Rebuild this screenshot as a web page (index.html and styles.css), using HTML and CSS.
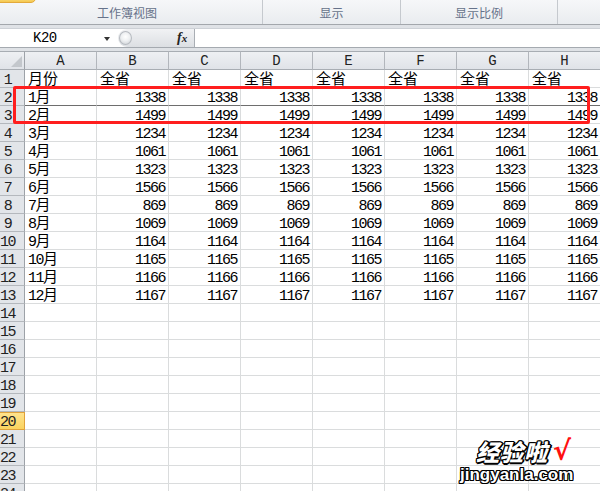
FILE: index.html
```html
<!DOCTYPE html>
<html lang="zh-CN">
<head>
<meta charset="utf-8">
<title>Excel</title>
<link rel="stylesheet" href="styles.css">
</head>
<body>
<div class="app">
  <div class="ribbon">
    <div class="filetab"></div>
    <div class="grp g1">工作簿视图</div>
    <div class="grp g2">显示</div>
    <div class="grp g3">显示比例</div>
    <div class="grp g4"></div>
  </div>
  <div class="fband">
    <div class="fbar">
      <div class="namebox"><span class="nb-text">K20</span><span class="nb-arrow"></span></div>
      <div class="fxarea"><span class="knob"></span><span class="fx"><i>f</i><i class="x">x</i></span></div>
      <div class="finput"></div>
    </div>
  </div>
  <div class="sheet">
    <div class="row hdr">
      <div class="corner"><svg width="11" height="11" viewBox="0 0 11 11"><polygon points="11,0 11,11 0,11" fill="#c3c7cc"/></svg></div>
      <div>A</div><div>B</div><div>C</div><div>D</div><div>E</div><div>F</div><div>G</div><div>H</div>
    </div>
    <div class="row"><div class="rh">1</div><div class="c t cjk">月份</div><div class="c t cjk">全省</div><div class="c t cjk">全省</div><div class="c t cjk">全省</div><div class="c t cjk">全省</div><div class="c t cjk">全省</div><div class="c t cjk">全省</div><div class="c t cjk">全省</div></div>
    <div class="row r2"><div class="rh">2</div><div class="c t">1月</div><div class="c n">1338</div><div class="c n">1338</div><div class="c n">1338</div><div class="c n">1338</div><div class="c n">1338</div><div class="c n">1338</div><div class="c n">1338</div></div>
    <div class="row"><div class="rh">3</div><div class="c t">2月</div><div class="c n">1499</div><div class="c n">1499</div><div class="c n">1499</div><div class="c n">1499</div><div class="c n">1499</div><div class="c n">1499</div><div class="c n">1499</div></div>
    <div class="row"><div class="rh">4</div><div class="c t">3月</div><div class="c n">1234</div><div class="c n">1234</div><div class="c n">1234</div><div class="c n">1234</div><div class="c n">1234</div><div class="c n">1234</div><div class="c n">1234</div></div>
    <div class="row"><div class="rh">5</div><div class="c t">4月</div><div class="c n">1061</div><div class="c n">1061</div><div class="c n">1061</div><div class="c n">1061</div><div class="c n">1061</div><div class="c n">1061</div><div class="c n">1061</div></div>
    <div class="row"><div class="rh">6</div><div class="c t">5月</div><div class="c n">1323</div><div class="c n">1323</div><div class="c n">1323</div><div class="c n">1323</div><div class="c n">1323</div><div class="c n">1323</div><div class="c n">1323</div></div>
    <div class="row"><div class="rh">7</div><div class="c t">6月</div><div class="c n">1566</div><div class="c n">1566</div><div class="c n">1566</div><div class="c n">1566</div><div class="c n">1566</div><div class="c n">1566</div><div class="c n">1566</div></div>
    <div class="row"><div class="rh">8</div><div class="c t">7月</div><div class="c n">869</div><div class="c n">869</div><div class="c n">869</div><div class="c n">869</div><div class="c n">869</div><div class="c n">869</div><div class="c n">869</div></div>
    <div class="row"><div class="rh">9</div><div class="c t">8月</div><div class="c n">1069</div><div class="c n">1069</div><div class="c n">1069</div><div class="c n">1069</div><div class="c n">1069</div><div class="c n">1069</div><div class="c n">1069</div></div>
    <div class="row"><div class="rh">10</div><div class="c t">9月</div><div class="c n">1164</div><div class="c n">1164</div><div class="c n">1164</div><div class="c n">1164</div><div class="c n">1164</div><div class="c n">1164</div><div class="c n">1164</div></div>
    <div class="row"><div class="rh">11</div><div class="c t">10月</div><div class="c n">1165</div><div class="c n">1165</div><div class="c n">1165</div><div class="c n">1165</div><div class="c n">1165</div><div class="c n">1165</div><div class="c n">1165</div></div>
    <div class="row"><div class="rh">12</div><div class="c t">11月</div><div class="c n">1166</div><div class="c n">1166</div><div class="c n">1166</div><div class="c n">1166</div><div class="c n">1166</div><div class="c n">1166</div><div class="c n">1166</div></div>
    <div class="row"><div class="rh">13</div><div class="c t">12月</div><div class="c n">1167</div><div class="c n">1167</div><div class="c n">1167</div><div class="c n">1167</div><div class="c n">1167</div><div class="c n">1167</div><div class="c n">1167</div></div>
    <div class="row"><div class="rh">14</div><div class="c"></div><div class="c"></div><div class="c"></div><div class="c"></div><div class="c"></div><div class="c"></div><div class="c"></div><div class="c"></div></div>
    <div class="row"><div class="rh">15</div><div class="c"></div><div class="c"></div><div class="c"></div><div class="c"></div><div class="c"></div><div class="c"></div><div class="c"></div><div class="c"></div></div>
    <div class="row"><div class="rh">16</div><div class="c"></div><div class="c"></div><div class="c"></div><div class="c"></div><div class="c"></div><div class="c"></div><div class="c"></div><div class="c"></div></div>
    <div class="row"><div class="rh">17</div><div class="c"></div><div class="c"></div><div class="c"></div><div class="c"></div><div class="c"></div><div class="c"></div><div class="c"></div><div class="c"></div></div>
    <div class="row"><div class="rh">18</div><div class="c"></div><div class="c"></div><div class="c"></div><div class="c"></div><div class="c"></div><div class="c"></div><div class="c"></div><div class="c"></div></div>
    <div class="row"><div class="rh">19</div><div class="c"></div><div class="c"></div><div class="c"></div><div class="c"></div><div class="c"></div><div class="c"></div><div class="c"></div><div class="c"></div></div>
    <div class="row"><div class="rh sel">20</div><div class="c"></div><div class="c"></div><div class="c"></div><div class="c"></div><div class="c"></div><div class="c"></div><div class="c"></div><div class="c"></div></div>
    <div class="row"><div class="rh">21</div><div class="c"></div><div class="c"></div><div class="c"></div><div class="c"></div><div class="c"></div><div class="c"></div><div class="c"></div><div class="c"></div></div>
    <div class="row"><div class="rh">22</div><div class="c"></div><div class="c"></div><div class="c"></div><div class="c"></div><div class="c"></div><div class="c"></div><div class="c"></div><div class="c"></div></div>
    <div class="row"><div class="rh">23</div><div class="c"></div><div class="c"></div><div class="c"></div><div class="c"></div><div class="c"></div><div class="c"></div><div class="c"></div><div class="c"></div></div>
    <div class="row"><div class="rh">24</div><div class="c"></div><div class="c"></div><div class="c"></div><div class="c"></div><div class="c"></div><div class="c"></div><div class="c"></div><div class="c"></div></div>
  </div>
  <div class="redbox"></div>
  <div class="wm">
    <div class="wm-top"><span class="wm-cn">经验啦</span><span class="wm-ck">√</span></div>
    <div class="wm-url">jingyanla.com</div>
  </div>
</div>
</body>
</html>
```
FILE: styles.css
```css
* { box-sizing: border-box; margin: 0; padding: 0; }
html, body { width: 600px; height: 491px; overflow: hidden; background: #fff; }
body { font-family: "Liberation Mono", "Noto Sans CJK SC", monospace; color: #000; }
.app { position: relative; width: 600px; height: 491px; overflow: hidden; }

/* ribbon */
.ribbon {
  position: relative; display: flex; height: 25px;
  border-bottom: 1px solid #a3a7ac;
  background: linear-gradient(#f6f7f9, #e9ecef);
}
.grp {
  height: 24px; line-height: 26px; text-align: center;
  font-family: "Noto Sans CJK SC", sans-serif; font-size: 12px; color: #66728a;
  border-right: 1px solid #c5c9ce;
}
.g1 { width: 263px; padding-right: 8px; }
.g2 { width: 138px; }
.g3 { width: 157px; }
.g4 { flex: 1; border-right: none; }
.filetab {
  position: absolute; left: -2px; top: -4px; width: 38px; height: 7px;
  background: linear-gradient(#fbe28f, #f5c84e);
  border: 1px solid #e3a93b; border-radius: 0 0 5px 0;
}

/* formula bar */
.fband { background: #dfe2e6; padding: 3px 0; }
.fbar {
  display: flex; height: 20px; background: #fff;
  border-top: 1px solid #cdd1d6; border-bottom: 1px solid #a5aab0;
}
.namebox { position: relative; width: 118px; height: 18px; }
.nb-text { position: absolute; left: 33px; top: 0; font-size: 14px; line-height: 19px; letter-spacing: -0.5px; }
.nb-arrow {
  position: absolute; left: 104px; top: 8px; width: 0; height: 0;
  border-left: 3px solid transparent; border-right: 3px solid transparent; border-top: 4px solid #333;
}
.fxarea {
  position: relative; width: 77px; height: 18px;
  background: linear-gradient(#f1f2f4, #dcdfe3);
  border-right: 1px solid #a9aeb4; border-radius: 9px 0 0 9px;
}
.knob {
  position: absolute; left: 1px; top: 2px; width: 13px; height: 14px; border-radius: 50%;
  background: radial-gradient(circle at 50% 40%, #ffffff 0%, #eef0f2 45%, #c9cdd2 100%);
  border: 1px solid #b7bbc1;
}
.fx {
  position: absolute; left: 59px; top: 0; font-family: "Liberation Serif", serif;
  font-weight: bold; font-size: 14px; line-height: 17px; color: #222;
}
.fx .x { font-size: 11px; }
.finput { flex: 1; }

/* sheet */
.row { display: grid; grid-template-columns: 25px repeat(8, 72px); height: 18px; }
.row > div {
  height: 18px; overflow: hidden; white-space: nowrap;
  border-right: 1px solid #dadcdd; border-bottom: 1px solid #dadcdd;
  font-size: 15px; line-height: 21px; letter-spacing: -1.5px;
}
.hdr { height: 19px; }
.hdr > div {
  height: 19px; background: linear-gradient(#eef0f3, #e0e3e8);
  border-top: 1px solid #a8adb3; border-right: 1px solid #b2b6bc; border-bottom: 1px solid #a8adb3;
  text-align: center; font-size: 14px; line-height: 19px; letter-spacing: 0; color: #222;
  font-family: "Liberation Mono", monospace;
}
.hdr > .corner { position: relative; border-right-color: #9da2a8; }
.corner svg { position: absolute; right: 2px; bottom: 2px; }
.rh {
  background: #e2e5e9; color: #222; text-align: center; padding-right: 9px;
  border-right-color: #9da2a8 !important; border-bottom-color: #b4b8bd !important;
}
.rh.sel {
  background: linear-gradient(#ffe38f, #fad35f);
  border-right-color: #e0a23a !important; border-bottom-color: #e0a23a !important;
  box-shadow: inset 0 1px 0 #e0a23a;
}
.c.t { padding-left: 3px; }
.c.cjk { letter-spacing: 0; }
.c.n { text-align: right; padding-right: 3px; }
.r2 > .c { border-bottom-color: #6e6e6e; }

/* overlays */
.redbox {
  position: absolute; left: 13px; top: 86px; width: 577px; height: 38px;
  border: 3px solid #ff1e1e; border-radius: 2px;
}
.wm { position: absolute; left: 458px; top: 437px; width: 140px; }
.wm-top { display: flex; align-items: center; height: 28px; padding-left: 18px; }
.wm-cn {
  font-family: "Noto Sans CJK SC", sans-serif; font-weight: 900; font-size: 23px; line-height: 28px;
  color: #fff; font-style: italic; letter-spacing: 1px;
  text-shadow: 1px 0 #000, -1px 0 #000, 0 1px #000, 0 -1px #000, 1px 1px #000, -1px -1px #000, 1px -1px #000, -1px 1px #000, 2px 0 #000, 0 2px #000;
}
.wm-ck {
  font-family: "DejaVu Sans", sans-serif; font-weight: bold; font-size: 27px; line-height: 28px;
  color: #ff1010; margin-left: 5px;
}
.wm-url {
  font-family: "Liberation Sans", sans-serif; font-weight: bold; font-size: 17px; line-height: 20px;
  color: #fff; padding-left: 2px; margin-top: 0;
  text-shadow: 1px 0 #000, -1px 0 #000, 0 1px #000, 0 -1px #000, 1px 1px #000, -1px -1px #000, 1px -1px #000, -1px 1px #000;
}
```
